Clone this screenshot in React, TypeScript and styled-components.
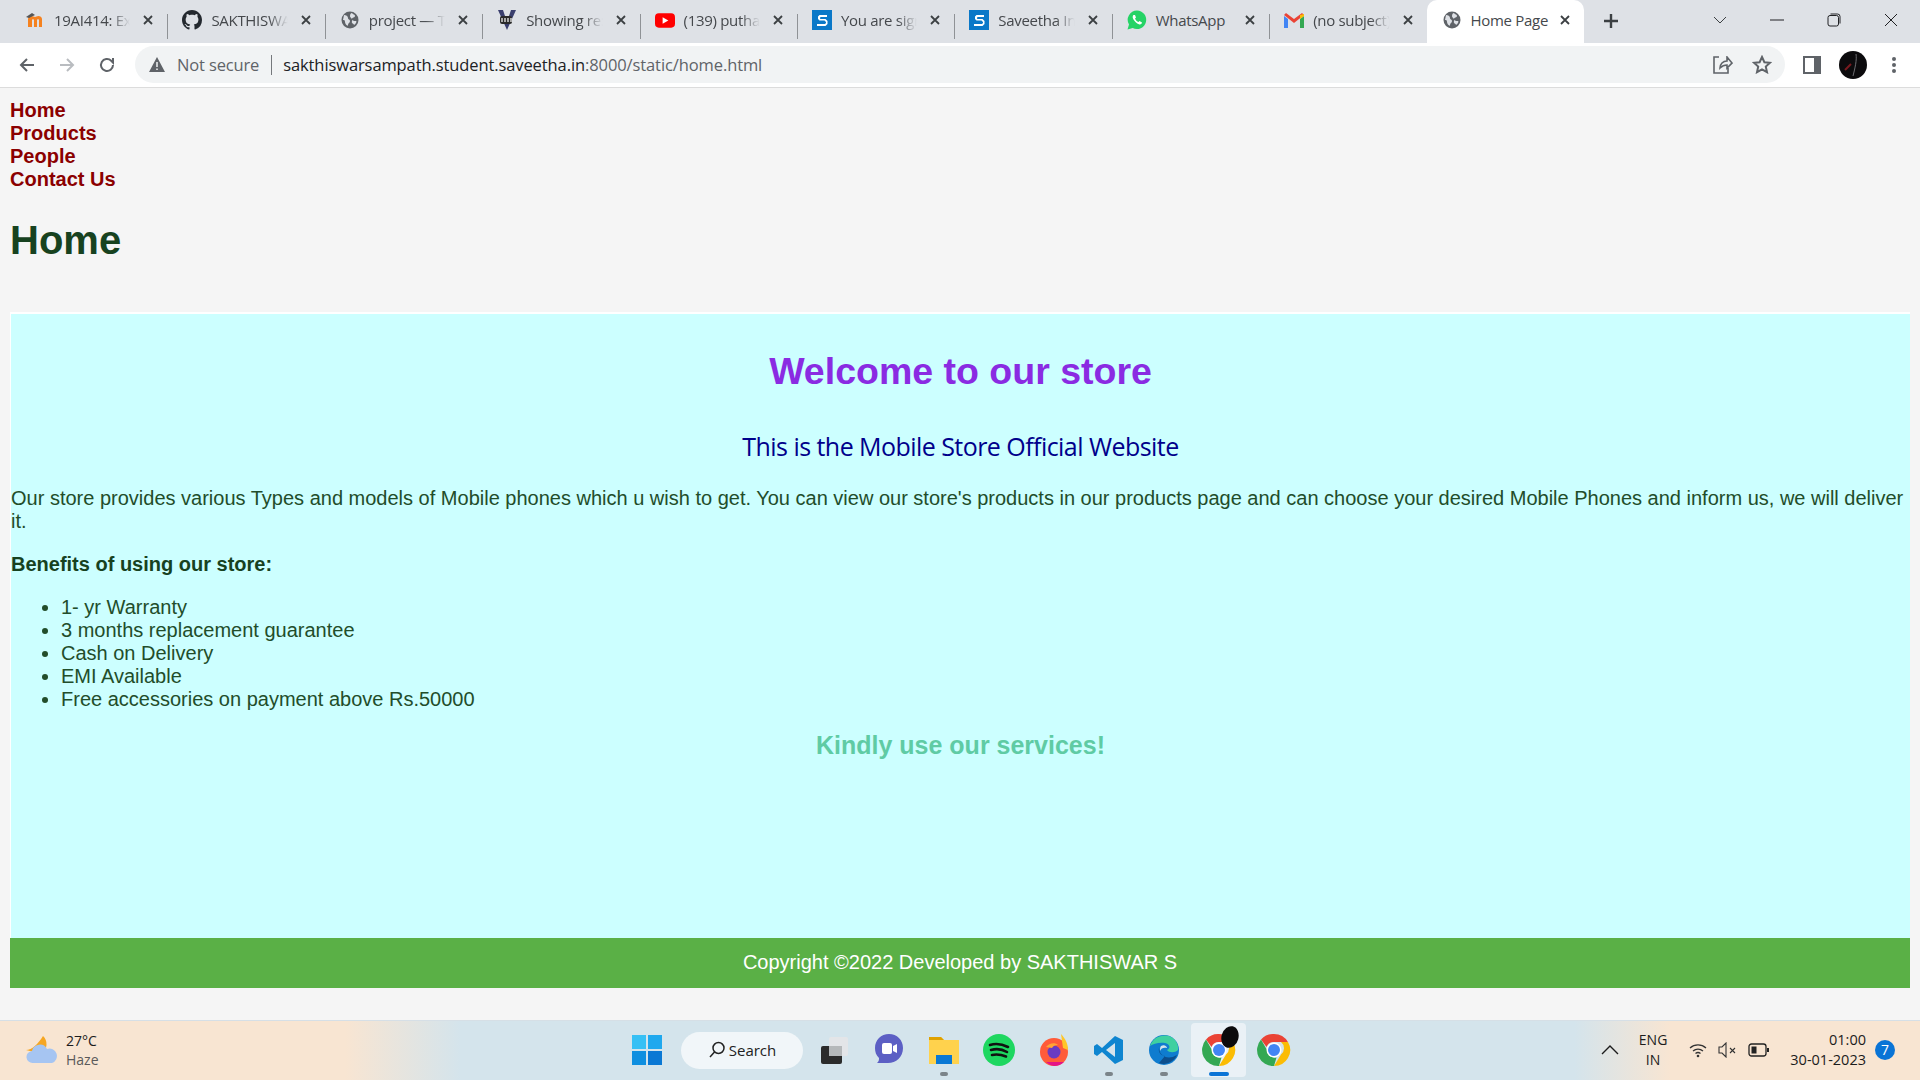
import React from "react";
import styled, { createGlobalStyle } from "styled-components";

const Global = createGlobalStyle`
  html, body { margin: 0; padding: 0; width: 1920px; height: 1080px; overflow: hidden; }
  body { font-family: "Liberation Sans", Arial, sans-serif; background: #f5f5f5; }
  * { box-sizing: border-box; }
`;

const Screen = styled.div`
  width: 1920px; height: 1080px; display: flex; flex-direction: column; background: #f5f5f5;
`;
const TabStrip = styled.div`
  height: 43px; background: #dee1e6; display: flex; align-items: flex-end; padding-left: 10px; flex: none;
`;
const TabItem = styled.div<{ $active?: boolean; $sep?: boolean }>`
  width: 157.4px; height: 43px; display: flex; align-items: center; padding: 0 13px 3px 15px; gap: 9px; position: relative;
  background: ${p => (p.$active ? "#fff" : "transparent")};
  border-radius: ${p => (p.$active ? "10px 10px 0 0" : "0")};
  &::after {
    content: ""; display: ${p => (p.$sep ? "block" : "none")}; position: absolute; right: -1px; top: 14px; height: 25px; width: 1px; background: #8f9296;
  }
`;
const TabIconBox = styled.span`
  width: 20px; height: 20px; flex: none; display: flex; align-items: center; justify-content: center;
`;
const TabTitle = styled.span<{ $fade?: boolean }>`
  flex: 1; min-width: 0; white-space: nowrap; font: 15px "Open Sans", "Noto Sans", sans-serif; letter-spacing: -0.3px; color: #45484c;
  ${p => (p.$fade ? "-webkit-mask-image: linear-gradient(90deg, #000 72%, transparent 96%); mask-image: linear-gradient(90deg, #000 72%, transparent 96%);" : "")}
`;
const Toolbar = styled.div`
  height: 45px; background: #fff; border-bottom: 1px solid #dcdcdc; display: flex; align-items: center; flex: none; padding: 0 8px 1px 7px;
`;
const NavBtn = styled.span`
  width: 40px; height: 32px; display: flex; align-items: center; justify-content: center; flex: none;
`;
const Omnibox = styled.div`
  height: 37px; width: 1650px; margin-left: 8px; background: #f1f3f4; border-radius: 19px; display: flex; align-items: center; padding: 0 13px 0 14px; flex: none;
`;
const Secure = styled.span`
  font: 16.5px "Open Sans", "Noto Sans", sans-serif; letter-spacing: -0.15px; color: #5f6368; margin-left: 12px; padding-right: 12px; border-right: 1px solid #75787c; line-height: 20px;
`;
const Url = styled.span`
  font: 16.5px "Open Sans", "Noto Sans", sans-serif; letter-spacing: -0.1px; color: #5f6368; margin-left: 11px; b { font-weight: 400; color: #202124; }
`;
const OmniRight = styled.div`
  margin-left: auto; display: flex; gap: 19px; align-items: center;
`;
const ToolRight = styled.div`
  display: flex; align-items: center; margin-left: 18px; gap: 18px;
`;
const Avatar = styled.span`
  width: 28px; height: 28px; border-radius: 50%; background: #0c0b0d; display: flex; flex: none; overflow: hidden;
`;
const Page = styled.div`
  flex: 1; min-height: 0; padding: 0 10px; display: flex; flex-direction: column; color: #17421f;
`;
const SiteNav = styled.nav`
  margin-top: 11px; display: flex; flex-direction: column;
`;
const NavLink = styled.a`
  font-size: 20px; font-weight: 700; line-height: 23px; color: #8b0000; text-decoration: none;
`;
const PageTitle = styled.h1`
  font-size: 40px; font-weight: 700; line-height: 46px; margin: 26px 0 49px; color: #17421f;
`;
const Main = styled.main`
  height: 626px; background: #ccffff; border-top: 2px solid #fff; border-left: 1px solid #fff; display: flex; flex-direction: column; flex: none;
`;
const Welcome = styled.h2`
  font-size: 37.5px; line-height: 43px; margin: 36px 0 0; text-align: center; color: #8a2be2; font-weight: 700;
`;
const Sub = styled.h3`
  font: 400 25px/30px "Open Sans", "Noto Sans", sans-serif; margin: 38px 0 0; text-align: center; color: #00008b; letter-spacing: -0.55px;
`;
const Para = styled.p`
  font-size: 20px; line-height: 23px; margin: 26px 0 0; color: #224d2a;
`;
const Benefits = styled.p`
  font-size: 20px; line-height: 23px; margin: 20px 0 0; font-weight: 700; color: #17421f;
`;
const List = styled.ul`
  margin: 20px 0 0; padding: 0 0 0 50px; font-size: 20px; line-height: 23px; color: #224d2a;
`;
const Kindly = styled.h4`
  font-size: 25px; font-weight: 700; line-height: 29px; margin: 20px 0 0; text-align: center; color: #5fcba4;
`;
const Footer = styled.footer`
  height: 50px; background: #5ab046; color: #fff; font-size: 20px; padding-bottom: 2px; display: flex; align-items: center; justify-content: center; flex: none;
`;
const Taskbar = styled.div`
  height: 60px; flex: none; display: flex; align-items: center; position: relative; border-top: 1px solid #d6dfe6;
  background: linear-gradient(90deg, #f8e5d2 0%, #f8e5d2 18%, #d4e4ec 24%, #d4e4ec 82%, #f8e5d2 87%, #f8e5d2 100%);
`;
const Weather = styled.div`
  display: flex; align-items: center; gap: 9px; padding-left: 25px; padding-bottom: 1px; width: 632px; flex: none;
`;
const WeatherText = styled.div`
  font: 14px/19px "Open Sans", "Noto Sans", sans-serif; color: #1c1c1c; span { display: block; color: #5a5a5a; }
`;
const Dock = styled.div`
  display: flex; align-items: center; height: 100%; padding-bottom: 1px;
`;
const SearchPill = styled.div`
  width: 122px; height: 37px; margin: 0 3px 0 19px; background: #f1f6f9; border-radius: 19px; display: flex; align-items: center; justify-content: center; gap: 3px;
  font: 15px "Open Sans", "Noto Sans", sans-serif; color: #222;
`;
const DockApp = styled.div<{ $active?: boolean; $dot?: boolean }>`
  width: 55px; height: 54px; display: flex; align-items: center; justify-content: center; position: relative; flex: none;
  background: ${p => (p.$active ? "#eaf1f6" : "transparent")}; border-radius: 4px;
  &::after {
    content: ""; position: absolute; bottom: 1px; left: 50%; transform: translateX(-50%); height: 4px; border-radius: 2px;
    width: ${p => (p.$active ? "20px" : "8px")}; background: ${p => (p.$active ? "#0a74d6" : "#7b8489")}; display: ${p => (p.$active || p.$dot ? "block" : "none")};
  }
`;
const ProfileBadge = styled.svg`
  position: absolute; top: 2px; left: 29px;
`;
const Tray = styled.div`
  margin-left: auto; display: flex; align-items: center; height: 100%; color: #1c1c1c; padding: 0 25px 1px 0;
`;
const Lang = styled.div`
  font: 14px/20px "Open Sans", "Noto Sans", sans-serif; text-align: center; margin: 0 21px 0 20px;
`;
const TrayIcons = styled.div`
  display: flex; align-items: center; gap: 10px;
`;
const Clock = styled.div`
  font: 14.5px/20px "Open Sans", "Noto Sans", sans-serif; text-align: right; margin-left: 20px;
`;
const Badge = styled.div`
  width: 20px; height: 20px; border-radius: 50%; background: #0a74d6; color: #fff; font: 14px/20px "Open Sans", sans-serif; text-align: center; margin-left: 9px;
`;
const WinControls = styled.div`
  margin-left: auto; display: flex; align-items: center; padding-right: 1px; height: 100%;
`;
const WinBtn = styled.span`
  width: 57px; height: 100%; display: flex; align-items: center; justify-content: center; padding-bottom: 4px;
`;
const NewTab = styled.span`
  width: 40px; height: 100%; margin-left: 7px; display: flex; align-items: center; justify-content: center; padding-bottom: 2px;
`;
const CloseIcon = styled.svg`
  flex: none;
`;

const Close = () => (
  <CloseIcon width="12" height="12" viewBox="0 0 12 12"><path d="M2 2l8 8M10 2l-8 8" stroke="#3c4043" strokeWidth="1.8" /></CloseIcon>
);
const Globe = () => (
  <svg width="18" height="18" viewBox="0 0 18 18"><circle cx="9" cy="9" r="8.5" fill="#5f6368" /><path d="M3 4c2 0 4 1 4 3s2 1 2 3-2 2-2 4-3-1-3-3-1-2-2-2zM11 2c1 2 3 1 3 3s-3 1-3 3 3 2 4 2 0 3-2 4c0-2-3-1-2-4s-2-3-2-5 1-3 2-3z" fill="#dee1e6" /></svg>
);
const Sq = () => (
  <svg width="20" height="20" viewBox="0 0 20 20"><rect width="20" height="20" fill="#0a78c8" /><path d="M15 5H7.5L6 6.5V9l1.5 1.5h5L14 12v1l-1 1H5v2h8.5l2-2v-3l-2-2h-5L8 8.5v-1L9 7h6z" fill="#fff" /></svg>
);
const Moodle = () => (
  <svg width="20" height="18" viewBox="0 0 20 18"><path d="M3 16V8c0-2 2-3 3.5-3S9 6 10 6s2-1 3.5-1S17 6 17 8v8h-3V9c0-1-2-1-2 0v7H9V9c0-1-2-1-2 0v7z" fill="#f58220" /><path d="M1 6l6-4 3 2-6 3z" fill="#555" /></svg>
);
const Octo = () => (
  <svg width="20" height="20" viewBox="0 0 16 16"><path fill="#24292f" d="M8 0C3.58 0 0 3.58 0 8c0 3.54 2.29 6.53 5.47 7.59.4.07.55-.17.55-.38 0-.19-.01-.82-.01-1.49-2.01.37-2.53-.49-2.69-.94-.09-.23-.48-.94-.82-1.13-.28-.15-.68-.52-.01-.53.63-.01 1.08.58 1.23.82.72 1.21 1.87.87 2.33.66.07-.52.28-.87.51-1.07-1.78-.2-3.64-.89-3.64-3.95 0-.87.31-1.59.82-2.15-.08-.2-.36-1.02.08-2.12 0 0 .67-.21 2.2.82.64-.18 1.32-.27 2-.27s1.36.09 2 .27c1.53-1.04 2.2-.82 2.2-.82.44 1.1.16 1.92.08 2.12.51.56.82 1.27.82 2.15 0 3.07-1.87 3.75-3.65 3.95.29.25.54.73.54 1.48 0 1.07-.01 1.93-.01 2.2 0 .21.15.46.55.38A8.01 8.01 0 0016 8c0-4.42-3.58-8-8-8z" /></svg>
);
const Vee = () => (
  <svg width="20" height="20" viewBox="0 0 20 20"><path d="M1 0h5l4 12 4-12h5l-9 20z" fill="#3a3f6e" /><rect x="3" y="6" width="12" height="8" rx="2" fill="#2a2a2a" /><path d="M5 8v4M8 8v4M11 8v4M14 8v4" stroke="#fff" strokeWidth="1.2" /></svg>
);
const Yt = () => (
  <svg width="21" height="15" viewBox="0 0 21 15"><rect width="21" height="15" rx="4" fill="#f00" /><path d="M8 4l6 3.5-6 3.5z" fill="#fff" /></svg>
);
const Wa = () => (
  <svg width="20" height="20" viewBox="0 0 20 20"><path d="M10 .5a9.3 9.3 0 00-8 14L.5 19.5l5.2-1.4A9.3 9.3 0 1010 .5z" fill="#25d366" /><path d="M6.5 5c-1 1-1.2 2.5 0 4.5s3.5 4.5 6 5c1.5.2 2.5-1 2.5-2l-2.5-1.5-1 1c-1.5-.5-3-2-3.5-3.5l1-1L8 5z" fill="#fff" /></svg>
);
const Gm = () => (
  <svg width="20" height="15" viewBox="0 0 20 15"><path d="M0 3v12h4V6z" fill="#4285f4" /><path d="M16 6v9h4V3z" fill="#34a853" /><path d="M0 2l10 8 10-8-2-2-8 6-8-6z" fill="#ea4335" /><path d="M16 2l4-1v2l-4 3z" fill="#fbbc04" /></svg>
);
const Chrome = ({ s = 34 }: { s?: number }) => (
  <svg width={s} height={s} viewBox="0 0 34 34">
    <path d="M17 1a16 16 0 0113.9 8H17a8 8 0 00-7.5 5L4 6.5A16 16 0 0117 1z" fill="#ea4335" />
    <path d="M31 9a16 16 0 01-14 24l7-11.5A8 8 0 0024 9z" fill="#fbbc04" />
    <path d="M17 33A16 16 0 014 6.5L10 17a8 8 0 009.5 7.5z" fill="#34a853" />
    <circle cx="17" cy="17" r="7.5" fill="#fff" /><circle cx="17" cy="17" r="6" fill="#4285f4" />
  </svg>
);

const tabs: { icon: React.ReactNode; title: string; sep?: boolean; active?: boolean; fade?: boolean }[] = [
  { icon: <Moodle />, title: "19AI414: Ex", sep: true, fade: true },
  { icon: <Octo />, title: "SAKTHISWA", sep: true, fade: true },
  { icon: <Globe />, title: "project — T", sep: true, fade: true },
  { icon: <Vee />, title: "Showing re:", sep: true, fade: true },
  { icon: <Yt />, title: "(139) putha", sep: true, fade: true },
  { icon: <Sq />, title: "You are sign", sep: true, fade: true },
  { icon: <Sq />, title: "Saveetha In", sep: true, fade: true },
  { icon: <Wa />, title: "WhatsApp", sep: true },
  { icon: <Gm />, title: "(no subject)", fade: true },
  { icon: <Globe />, title: "Home Page", active: true },
];

export default function App() {
  return (
    <Screen>
      <Global />
      <TabStrip>
        {tabs.map(t => (
          <TabItem key={t.title} $active={t.active} $sep={t.sep}>
            <TabIconBox>{t.icon}</TabIconBox>
            <TabTitle $fade={t.fade}>{t.title}</TabTitle>
            <Close />
          </TabItem>
        ))}
        <NewTab>
          <svg width="18" height="18" viewBox="0 0 18 18"><path d="M9 2v14M2 9h14" stroke="#3c4043" strokeWidth="2.4" /></svg>
        </NewTab>
        <WinControls>
          <WinBtn><svg width="14" height="8" viewBox="0 0 14 8"><path d="M1 1l6 6 6-6" fill="none" stroke="#3c4043" strokeWidth="1" /></svg></WinBtn>
          <WinBtn><svg width="14" height="2" viewBox="0 0 14 2"><path d="M0 1h14" stroke="#202124" strokeWidth="1" /></svg></WinBtn>
          <WinBtn><svg width="14" height="14" viewBox="0 0 14 14"><rect x="1" y="2.5" width="10.5" height="10.5" rx="2" fill="none" stroke="#202124" /><path d="M3.5 1h7A2.5 2.5 0 0113 3.5v7" fill="none" stroke="#202124" /></svg></WinBtn>
          <WinBtn><svg width="14" height="14" viewBox="0 0 14 14"><path d="M1 1l12 12M13 1L1 13" stroke="#202124" strokeWidth="1" /></svg></WinBtn>
        </WinControls>
      </TabStrip>
      <Toolbar>
        <NavBtn><svg width="18" height="18" viewBox="0 0 18 18"><path d="M16 9H3M9 3L3 9l6 6" fill="none" stroke="#5f6368" strokeWidth="2" /></svg></NavBtn>
        <NavBtn><svg width="18" height="18" viewBox="0 0 18 18"><path d="M2 9h13M9 3l6 6-6 6" fill="none" stroke="#b9bcc0" strokeWidth="2" /></svg></NavBtn>
        <NavBtn><svg width="18" height="18" viewBox="0 0 18 18"><path d="M15 9a6 6 0 11-1.8-4.300L15 6.500V2" fill="none" stroke="#5f6368" strokeWidth="2" /></svg></NavBtn>
        <Omnibox>
          <svg width="16" height="15" viewBox="0 0 16 15"><path d="M8 0l8 15H0z" fill="#5f6368" /><path d="M8 5v5M8 11.5V13" stroke="#f1f3f4" strokeWidth="1.5" /></svg>
          <Secure>Not secure</Secure>
          <Url><b>sakthiswarsampath.student.saveetha.in</b>:8000/static/home.html</Url>
          <OmniRight>
            <svg width="20" height="18" viewBox="0 0 20 18"><path d="M6 1H1v16h14v-5M7 12c0-4 3-7 7-7V1l5 6-5 5V9c-3 0-5 1-7 3z" fill="none" stroke="#5f6368" strokeWidth="1.6" /></svg>
            <svg width="20" height="19" viewBox="0 0 20 19"><path d="M10 2l2.4 5.2 5.6.6-4.2 3.8 1.2 5.600L10 14.400 5 17.200l1.200-5.600L2 7.800l5.600-.6z" fill="none" stroke="#5f6368" strokeWidth="2" /></svg>
          </OmniRight>
        </Omnibox>
        <ToolRight>
          <svg width="18" height="18" viewBox="0 0 18 18"><rect width="18" height="18" fill="#5f6368" /><rect x="2" y="2" width="9" height="14" fill="#fff" /></svg>
          <Avatar>
            <svg width="28" height="28" viewBox="0 0 28 28"><path d="M17 3c1 6-1 14-3 22" fill="none" stroke="#6e6e72" strokeWidth="1" /><path d="M6 19l6-6" stroke="#7a1a1f" strokeWidth="2" /></svg>
          </Avatar>
          <svg width="18" height="18" viewBox="0 0 18 18"><circle cx="9" cy="3" r="2" fill="#5f6368" /><circle cx="9" cy="9" r="2" fill="#5f6368" /><circle cx="9" cy="15" r="2" fill="#5f6368" /></svg>
        </ToolRight>
      </Toolbar>
      <Page>
        <SiteNav>
          <NavLink href="#">Home</NavLink>
          <NavLink href="#">Products</NavLink>
          <NavLink href="#">People</NavLink>
          <NavLink href="#">Contact Us</NavLink>
        </SiteNav>
        <PageTitle>Home</PageTitle>
        <Main>
          <Welcome>Welcome to our store</Welcome>
          <Sub>This is the Mobile Store Official Website</Sub>
          <Para>Our store provides various Types and models of Mobile phones which u wish to get. You can view our store's products in our products page and can choose your desired Mobile Phones and inform us, we will deliver it.</Para>
          <Benefits>Benefits of using our store:</Benefits>
          <List>
            <li>1- yr Warranty</li>
            <li>3 months replacement guarantee</li>
            <li>Cash on Delivery</li>
            <li>EMI Available</li>
            <li>Free accessories on payment above Rs.50000</li>
          </List>
          <Kindly>Kindly use our services!</Kindly>
        </Main>
        <Footer>Copyright ©2022 Developed by SAKTHISWAR S</Footer>
      </Page>
      <Taskbar>
        <Weather>
          <svg width="32" height="30" viewBox="0 0 32 30"><path d="M18 1a11 11 0 01-1 17C12 18 6 16 1 15c6 0 12-6 17-14z" fill="#f5a623" /><path d="M8 28a6 6 0 01-1-12 8 8 0 0115-2 7 7 0 015 14z" fill="#a6c5f2" /></svg>
          <WeatherText>27°C<span>Haze</span></WeatherText>
        </Weather>
        <Dock>
          <svg width="30" height="30" viewBox="0 0 30 30"><rect width="14" height="14" fill="#36c0f5" /><rect x="16" width="14" height="14" fill="#1fa8ee" /><rect y="16" width="14" height="14" fill="#0f8fe0" /><rect x="16" y="16" width="14" height="14" fill="#0a78d4" /></svg>
          <SearchPill>
            <svg width="18" height="18" viewBox="0 0 18 18"><circle cx="10.5" cy="7" r="5.5" fill="none" stroke="#222" strokeWidth="1.5" /><path d="M6.5 11L2 16" stroke="#222" strokeWidth="1.5" /></svg>
            Search
          </SearchPill>
          <DockApp><svg width="30" height="30" viewBox="0 0 30 30"><rect x="10" y="2" width="19" height="19" rx="2" fill="#e3e5e8" /><rect x="2" y="11" width="21" height="18" rx="2" fill="#2b2b2b" /><rect x="10" y="11" width="13" height="10" fill="#b5b8ba" /></svg></DockApp>
          <DockApp><svg width="30" height="34" viewBox="0 0 30 34"><path d="M15 1c8 0 14 6 14 14 0 9-7 15-15 15H3c2-2 2-3 2-5-3-3-4-6-4-10C1 7 7 1 15 1z" fill="#5c5fc4" /><rect x="8" y="10" width="10" height="11" rx="2" fill="#fff" /><path d="M19 13l4-2v9l-4-2z" fill="#fff" /></svg></DockApp>
          <DockApp $dot><svg width="32" height="30" viewBox="0 0 32 30"><path d="M1 2h12l3 3h15v24H1z" fill="#ffd24d" /><path d="M1 2h12l3 3H1z" fill="#e0a100" /><rect x="8" y="20" width="16" height="9" fill="#0a78d4" /></svg></DockApp>
          <DockApp><svg width="32" height="32" viewBox="0 0 32 32"><circle cx="16" cy="16" r="16" fill="#1ed760" /><path d="M7 11c6-2 12-1 18 2M8 16c5-1.5 11-1 16 2M9 21c5-1 9-.5 14 1.5" fill="none" stroke="#111" strokeWidth="2.6" strokeLinecap="round" /></svg></DockApp>
          <DockApp><svg width="32" height="34" viewBox="0 0 32 34"><circle cx="16" cy="19" r="14" fill="#ff5b3a" /><path d="M16 33a14 14 0 01-8-4h18a14 14 0 01-10 4z" fill="#e31587" /><path d="M23 1c5 5 7 11 7 16l-5-2z" fill="#ffc628" /><circle cx="16" cy="19" r="6.5" fill="#6a3bc2" /><path d="M8 14c3-4 9-5 12-2-3 0-5 1-6 3z" fill="#ffa436" /></svg></DockApp>
          <DockApp $dot><svg width="30" height="30" viewBox="0 0 30 30"><path d="M21 1l8 4v20l-8 4L8 17l-5 4-3-2v-8l3-2 5 4z" fill="#0e85d0" /><path d="M21 8l-9 7 9 7z" fill="#d4e4ec" /></svg></DockApp>
          <DockApp $dot><svg width="32" height="32" viewBox="0 0 32 32"><circle cx="16" cy="16" r="15" fill="#0f7ccf" /><path d="M2 12C5 3 14 0 21 2c6 2 10 8 9 14-3 3-9 3-11 0 4-2 3-6-2-7C11 8 5 10 2 12z" fill="#3fd0a0" /><path d="M17 22c-4 0-7-4-6-8 0 7 8 13 18 7-3 7-12 11-18 8z" fill="#0c4e8c" /><path d="M13 12c3-2 6 0 6 2-3-1-6 0-7 3 0-2 0-4 1-5z" fill="#d4e4ec" /></svg></DockApp>
          <DockApp $active>
            <Chrome />
            <ProfileBadge width="20" height="26" viewBox="0 0 20 26"><ellipse cx="10" cy="12" rx="8.5" ry="11" fill="#0c0b0d" transform="rotate(15 10 12)" /></ProfileBadge>
          </DockApp>
          <DockApp><Chrome /></DockApp>
        </Dock>
        <Tray>
          <svg width="18" height="10" viewBox="0 0 18 10"><path d="M1 9l8-8 8 8" fill="none" stroke="#1c1c1c" strokeWidth="1.4" /></svg>
          <Lang>ENG<br />IN</Lang>
          <TrayIcons>
            <svg width="20" height="16" viewBox="0 0 20 16"><path d="M2 6a12 12 0 0116 0M5 9a8 8 0 0110 0M7.5 11.5a4 4 0 015 0" fill="none" stroke="#333" strokeWidth="1.3" /><circle cx="10" cy="14" r="1.3" fill="#333" /></svg>
            <svg width="20" height="16" viewBox="0 0 20 16"><path d="M1 5h3l4-4v14l-4-4H1z" fill="none" stroke="#333" strokeWidth="1.1" /><path d="M12 6l5 5M17 6l-5 5" stroke="#333" strokeWidth="1.1" /></svg>
            <svg width="22" height="14" viewBox="0 0 22 14"><rect x="1" y="1" width="17" height="12" rx="2.5" fill="none" stroke="#222" strokeWidth="1.3" /><rect x="3.5" y="3.5" width="5" height="7" fill="#222" /><rect x="19" y="5" width="2" height="4" fill="#222" /></svg>
          </TrayIcons>
          <Clock>01:00<br />30-01-2023</Clock>
          <Badge>7</Badge>
        </Tray>
      </Taskbar>
    </Screen>
  );
}
